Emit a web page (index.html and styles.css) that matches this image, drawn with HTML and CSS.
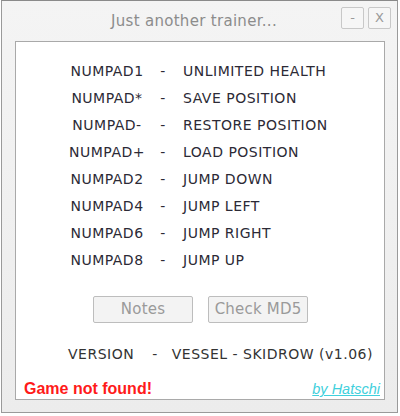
FILE: index.html
```html
<!DOCTYPE html>
<html>
<head>
<meta charset="utf-8">
<link rel="stylesheet" href="styles.css">
</head>
<body>
<div class="window">
  <div class="titlebar">
    <div class="title">Just another trainer...</div>
    <div class="ctl">-</div>
    <div class="ctl close">X</div>
  </div>
  <div class="panel">
    <div class="keys">
      <span class="k">NUMPAD1</span><span class="d">-</span><span class="a">UNLIMITED HEALTH</span>
      <span class="k">NUMPAD*</span><span class="d">-</span><span class="a">SAVE POSITION</span>
      <span class="k">NUMPAD-</span><span class="d">-</span><span class="a">RESTORE POSITION</span>
      <span class="k">NUMPAD+</span><span class="d">-</span><span class="a">LOAD POSITION</span>
      <span class="k">NUMPAD2</span><span class="d">-</span><span class="a">JUMP DOWN</span>
      <span class="k">NUMPAD4</span><span class="d">-</span><span class="a">JUMP LEFT</span>
      <span class="k">NUMPAD6</span><span class="d">-</span><span class="a">JUMP RIGHT</span>
      <span class="k">NUMPAD8</span><span class="d">-</span><span class="a">JUMP UP</span>
    </div>
    <div class="buttons">
      <div class="btn">Notes</div>
      <div class="btn">Check MD5</div>
    </div>
    <div class="version">
      <span class="v1">VERSION</span><span class="v2">-</span><span class="v3">VESSEL - SKIDROW (v1.06)</span>
    </div>
    <div class="footer">
      <span class="err">Game not found!</span>
      <span class="by">by Hatschi</span>
    </div>
  </div>
</div>
</body>
</html>
```
FILE: styles.css
```css
html, body {
  margin: 0;
  padding: 0;
  background: #ffffff;
}
.window {
  box-sizing: border-box;
  margin-left: 1px;
  width: 397px;
  height: 413px;
  border: 1px solid #9a9a9a;
  border-top-color: #8a8a8a;
  background: linear-gradient(#f4f4f4, #ececec);
  display: flex;
  flex-direction: column;
}
.titlebar {
  height: 40px;
  display: flex;
  align-items: flex-start;
  padding-right: 6px;
}
.title {
  flex: 1;
  text-align: center;
  padding-left: 49px;
  margin-right: 4px;
  font-family: "DejaVu Sans", sans-serif;
  font-size: 15px;
  letter-spacing: 0.3px;
  color: #8c8c8c;
  line-height: 40px;
}
.ctl {
  box-sizing: border-box;
  width: 23px;
  height: 22px;
  margin-top: 6px;
  border: 1px solid #c8c8c8;
  border-radius: 2px;
  background: #f6f6f6;
  color: #9a9a9a;
  font-family: "DejaVu Sans", sans-serif;
  font-size: 13px;
  line-height: 19px;
  text-align: center;
}
.close {
  margin-left: 4px;
}
.panel {
  box-sizing: border-box;
  margin: 0 12px 0 13px;
  height: 359px;
  border: 1px solid #a9a9a9;
  background: #ffffff;
  display: flex;
  flex-direction: column;
  font-family: "DejaVu Sans", sans-serif;
  font-size: 14px;
  letter-spacing: 0.5px;
  color: #2c2a36;
}
.keys {
  display: grid;
  grid-template-columns: 80px 32px auto;
  grid-auto-rows: 27px;
  align-items: center;
  padding-top: 15px;
  padding-left: 51px;
}
.k {
  text-align: center;
}
.d {
  text-align: center;
}
.a {
  padding-left: 4px;
}
.buttons {
  display: flex;
  gap: 15px;
  padding-left: 77px;
  margin-top: 23px;
}
.btn {
  box-sizing: border-box;
  width: 100px;
  height: 27px;
  border: 1px solid #bdbdbd;
  border-radius: 2px;
  background: #f3f3f3;
  color: #9a9a9a;
  font-size: 15px;
  letter-spacing: 0.2px;
  line-height: 25px;
  text-align: center;
}
.version {
  display: flex;
  align-items: center;
  height: 20px;
  margin-top: 21px;
  padding-left: 52px;
  color: #333333;
}
.v2 {
  margin-left: 18px;
}
.v3 {
  margin-left: 14px;
}
.footer {
  display: flex;
  justify-content: space-between;
  align-items: center;
  height: 20px;
  margin-top: 15px;
  padding-left: 8px;
  padding-right: 4px;
}
.err {
  font-family: "Liberation Sans", Arial, sans-serif;
  font-weight: bold;
  font-size: 16px;
  letter-spacing: 0;
  color: #ff1a1a;
}
.by {
  font-family: "Liberation Sans", Arial, sans-serif;
  font-style: italic;
  font-size: 14.5px;
  letter-spacing: 0;
  color: #3fd0dc;
  text-decoration: underline;
}
```
